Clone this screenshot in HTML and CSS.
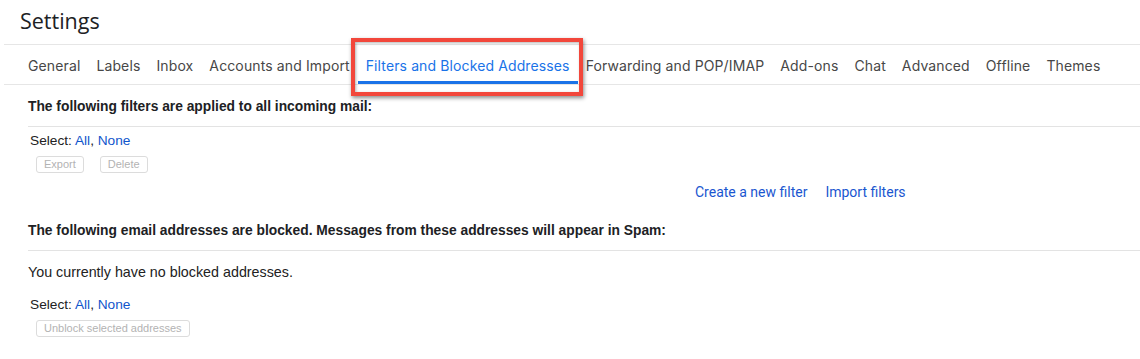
FILE: index.html
```html
<!DOCTYPE html>
<html>
<head>
<meta charset="utf-8">
<link rel="stylesheet" href="styles.css">
</head>
<body>
<div class="page">
  <header class="title">Settings</header>
  <nav class="tabs">
    <span class="tab">General</span>
    <span class="tab">Labels</span>
    <span class="tab">Inbox</span>
    <span class="tab">Accounts and Import</span>
    <span class="tab active">Filters and Blocked Addresses<span class="highlight"></span></span>
    <span class="tab">Forwarding and POP/IMAP</span>
    <span class="tab">Add-ons</span>
    <span class="tab">Chat</span>
    <span class="tab">Advanced</span>
    <span class="tab">Offline</span>
    <span class="tab">Themes</span>
  </nav>
  <section class="section">
    <div class="heading">The following filters are applied to all incoming mail:</div>
    <div class="select">Select: <a class="link">All</a>, <a class="link">None</a></div>
    <div class="buttons">
      <button class="btn">Export</button>
      <button class="btn">Delete</button>
    </div>
    <div class="actions">
      <a class="action">Create a new filter</a>
      <a class="action">Import filters</a>
    </div>
  </section>
  <section class="section second">
    <div class="heading">The following email addresses are blocked. Messages from these addresses will appear in Spam:</div>
    <div class="note">You currently have no blocked addresses.</div>
    <div class="select">Select: <a class="link">All</a>, <a class="link">None</a></div>
    <div class="buttons">
      <button class="btn">Unblock selected addresses</button>
    </div>
  </section>
</div>
</body>
</html>
```
FILE: styles.css
```css
html, body {
  margin: 0;
  padding: 0;
  background: #fff;
}
.page {
  font-family: Roboto, "Liberation Sans", Arial, sans-serif;
  color: #202124;
  width: 1140px;
  height: 359px;
  overflow: hidden;
}
.title {
  height: 44px;
  padding-left: 20px;
  font-family: "Open Sans", Roboto, sans-serif;
  font-size: 21.5px;
  line-height: 42px;
  color: #202124;
}
.tabs {
  margin-left: 4px;
  height: 39px;
  border-top: 1px solid #e6e6e6;
  border-bottom: 1px solid #e6e6e6;
  display: flex;
  padding-left: 16px;
  font-family: Inter, Roboto, sans-serif;
  font-size: 14px;
  color: #474747;
}
.tab {
  position: relative;
  padding: 2px 8px 0;
  line-height: 38px;
  white-space: nowrap;
  letter-spacing: 0.12px;
}
.tab.active {
  color: #1a73e8;
  box-shadow: inset 0 -3px 0 #1a73e8;
}
.highlight {
  position: absolute;
  left: -7px;
  right: -5px;
  top: -7px;
  bottom: -12px;
  border: 4px solid #f2473b;
  box-shadow: 1px 2px 4px rgba(0,0,0,0.45), inset 1px 1px 3px rgba(0,0,0,0.3);
  pointer-events: none;
}
.section {
  padding-left: 28px;
}
.heading {
  font-family: "Liberation Sans", Arial, sans-serif;
  font-weight: bold;
  font-size: 13.8px;
  line-height: 20px;
  padding-top: 12px;
  padding-bottom: 9px;
  border-bottom: 1px solid #e3e3e3;
  color: #202124;
}
.select {
  font-family: "Liberation Sans", Arial, sans-serif;
  font-size: 13.7px;
  line-height: 16px;
  padding-top: 6px;
  padding-left: 2px;
  color: #222;
}
.link {
  color: #1155cc;
}
.buttons {
  display: flex;
  gap: 16px;
  padding-left: 8px;
  padding-top: 7px;
}
.btn {
  font-family: "Liberation Sans", Arial, sans-serif;
  font-size: 11px;
  color: #b3b3b3;
  background: #fff;
  border: 1px solid #dcdcdc;
  border-radius: 3px;
  height: 17px;
  padding: 0 7px;
  line-height: 15px;
}
.actions {
  display: flex;
  gap: 18px;
  margin-left: 667px;
  padding-top: 11px;
  font-size: 14px;
  line-height: 16px;
}
.action {
  color: #1a56d0;
}
.second .heading {
  padding-top: 21px;
  padding-bottom: 9px;
}
.note {
  font-size: 14.3px;
  line-height: 16px;
  padding-top: 13px;
  padding-bottom: 9px;
  color: #222;
  font-family: "Liberation Sans", Arial, sans-serif;
}
.second .select {
  padding-top: 8px;
}
.second .buttons {
  padding-top: 7px;
}
```
